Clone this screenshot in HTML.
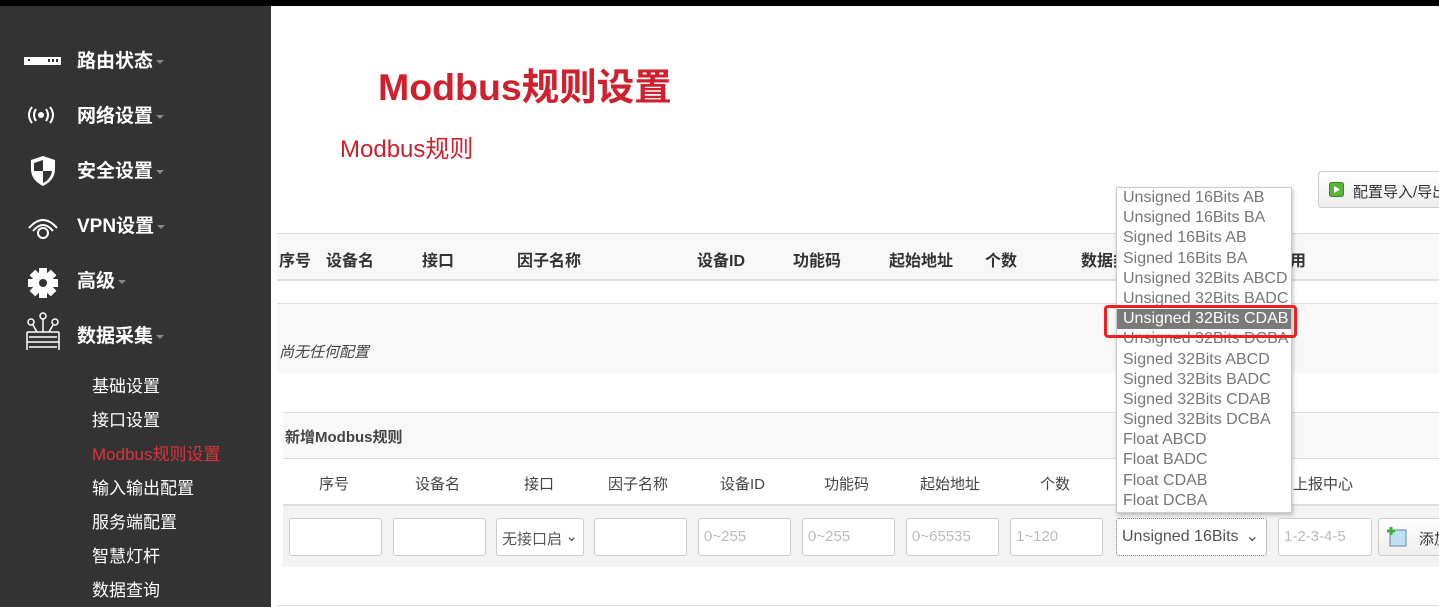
<!DOCTYPE html>
<html><head><meta charset="utf-8"><style>
*{box-sizing:border-box;margin:0;padding:0}
body{width:1439px;height:607px;overflow:hidden;background:#fff;font-family:"Liberation Sans","Noto Sans CJK SC",sans-serif;position:relative;color:#333}
.top{position:absolute;left:0;top:0;width:1439px;height:6px;background:#000}
.side{position:absolute;left:0;top:6px;width:271px;height:601px;background:#333}
.mi{position:absolute;left:77px;color:#fff;font-weight:bold;font-size:19px}
.mi .c{display:inline-block;width:0;height:0;border-left:4px solid transparent;border-right:4px solid transparent;border-top:4px solid #888;margin-left:3px;vertical-align:middle}
.ic{position:absolute;left:24px}
.sub{position:absolute;left:92px;color:#fff;font-size:17px}
.a{position:absolute}
.bar{position:absolute;left:277px;width:1162px}
.th{position:absolute;font-weight:bold;font-size:16px;color:#333}
.h2{position:absolute;font-size:15px;color:#444}
.in{position:absolute;top:518px;height:38px;border:1px solid #ccc;border-radius:3px;background:#fff;font-size:15px;color:#bbb;padding:9px 5px}
.dd{position:absolute;left:1116px;top:187px;width:176px;height:326px;background:#fff;border:1px solid #ccc;box-shadow:1px 2px 4px rgba(0,0,0,.25)}
.dd div{height:20.2px;line-height:20px;padding-left:6px;font-size:16px;color:#777;white-space:nowrap}
.dd .s{background:#7a7a7a;color:#fff}
</style></head><body>
<div class="top"></div>
<div class="side">
<svg class="ic" style="top:49px" width="37" height="12"><rect x="0" y="2" width="37" height="8" fill="#fff"/><rect x="4" y="4" width="2" height="2" fill="#333"/><rect x="24" y="4" width="2" height="3" fill="#333"/><rect x="28" y="4" width="2" height="3" fill="#333"/><rect x="32" y="4" width="2" height="3" fill="#333"/></svg>
<div class="mi" style="top:40px">路由状态<span class="c"></span></div>
<svg class="ic" style="top:98px" width="34" height="22"><g fill="none" stroke="#fff" stroke-width="2"><path d="M8 3Q2 11 8 19"/><path d="M12 5Q8 11 12 17"/><path d="M26 3Q32 11 26 19"/><path d="M22 5Q26 11 22 17"/></g><circle cx="17" cy="11" r="3" fill="#fff"/></svg>
<div class="mi" style="top:95px">网络设置<span class="c"></span></div>
<svg class="ic" style="left:29px;top:149px" width="28" height="32"><path d="M14 1L26 5V14Q26 25 14 31Q2 25 2 14V5Z" fill="#fff"/><path d="M14 5V16H23Q22 24 14 28V16H5V8Z" fill="#333"/></svg>
<div class="mi" style="top:150px">安全设置<span class="c"></span></div>
<svg class="ic" style="left:27px;top:208px" width="32" height="26"><g fill="none" stroke="#fff" stroke-width="2"><path d="M2 14Q16 -2 30 14"/><path d="M6 17Q16 5 26 17"/><circle cx="16" cy="19" r="5"/></g></svg>
<div class="mi" style="top:205px">VPN设置<span class="c"></span></div>
<svg class="ic" style="left:27px;top:261px" width="32" height="32"><g fill="#fff"><circle cx="16" cy="16" r="11"/><rect x="12" y="1" width="8" height="30"/><rect x="1" y="12" width="30" height="8"/><rect x="12" y="1" width="8" height="30" transform="rotate(45 16 16)"/><rect x="12" y="1" width="8" height="30" transform="rotate(-45 16 16)"/></g><circle cx="16" cy="16" r="4" fill="#333"/></svg>
<div class="mi" style="top:260px">高级<span class="c"></span></div>
<svg class="ic" style="left:25px;top:306px" width="36" height="40"><g fill="none" stroke="#fff" stroke-width="1.5"><circle cx="18" cy="4" r="3"/><circle cx="6" cy="10" r="3"/><circle cx="30" cy="10" r="3"/><path d="M18 7V20M8 13L12 20M28 13L24 20M2 20H34M4 25H32M2 30H34M4 35H32M2 20V38M34 20V38"/></g></svg>
<div class="mi" style="top:315px">数据采集<span class="c"></span></div>
<div class="sub" style="top:366px">基础设置</div>
<div class="sub" style="top:400px">接口设置</div>
<div class="sub" style="top:434px;color:#e0313d">Modbus规则设置</div>
<div class="sub" style="top:468px">输入输出配置</div>
<div class="sub" style="top:502px">服务端配置</div>
<div class="sub" style="top:536px">智慧灯杆</div>
<div class="sub" style="top:570px">数据查询</div>
</div>

<div class="a" style="left:378px;top:56px;font-size:37.5px;font-weight:bold;color:#d0202e">Modbus规则设置</div>
<div class="a" style="left:340px;top:129px;font-size:24px;color:#d0202e">Modbus规则</div>
<div class="a" style="left:1318px;top:171px;width:140px;height:37px;border:1px solid #ccc;border-radius:4px;background:linear-gradient(#fff,#eee);font-size:15px;color:#333;padding:9px 0 0 34px">配置导入/导出<svg style="position:absolute;left:10px;top:10px" width="15" height="15"><rect x=".5" y=".5" width="14" height="14" rx="2" fill="#5bb43a" stroke="#3a8a22"/><path d="M5 4L11 7.5L5 11Z" fill="#fff"/></svg></div>

<div class="bar" style="top:233px;height:48px;background:#f8f8f8;border-top:1px solid #ddd;border-bottom:2px solid #ddd"></div>
<div class="th" style="left:279px;top:247px">序号</div><div class="th" style="left:326px;top:247px">设备名</div><div class="th" style="left:422px;top:247px">接口</div><div class="th" style="left:517px;top:247px">因子名称</div><div class="th" style="left:697px;top:247px">设备ID</div><div class="th" style="left:793px;top:247px">功能码</div><div class="th" style="left:889px;top:247px">起始地址</div><div class="th" style="left:985px;top:247px">个数</div><div class="th" style="left:1081px;top:247px">数据类</div><div class="th" style="left:1290px;top:247px">用</div>
<div class="bar" style="top:303px;height:70px;background:#f8f8f8;border-top:1px solid #ddd"></div>
<div class="a" style="left:279px;top:341px;font-size:15px;font-style:italic;color:#444">尚无任何配置</div>

<div class="bar" style="left:283px;top:412px;height:47px;background:#f8f8f8;border-top:1px solid #ddd;border-bottom:1px solid #ddd"></div>
<div class="a" style="left:285px;top:426px;font-size:15px;font-weight:bold;color:#444">新增Modbus规则</div>
<div class="bar" style="left:283px;top:504px;height:63px;background:#f3f3f3;border-top:2px solid #ddd"></div>
<div class="h2" style="left:319px;top:473px">序号</div><div class="h2" style="left:415px;top:473px">设备名</div><div class="h2" style="left:524px;top:473px">接口</div><div class="h2" style="left:608px;top:473px">因子名称</div><div class="h2" style="left:720px;top:473px">设备ID</div><div class="h2" style="left:824px;top:473px">功能码</div><div class="h2" style="left:920px;top:473px">起始地址</div><div class="h2" style="left:1040px;top:473px">个数</div><div class="h2" style="left:1293px;top:473px">上报中心</div>
<div class="in" style="left:289px;width:93px"></div>
<div class="in" style="left:393px;width:93px"></div>
<div class="in" style="left:496px;width:88px;color:#555">无接口启 <span style="position:absolute;right:5px;top:8px">⌄</span></div>
<div class="in" style="left:594px;width:93px"></div>
<div class="in" style="left:698px;width:93px">0~255</div>
<div class="in" style="left:802px;width:93px">0~255</div>
<div class="in" style="left:906px;width:93px">0~65535</div>
<div class="in" style="left:1010px;width:93px">1~120</div>
<div class="in" style="left:1116px;width:151px;border:1px dotted #777;color:#555;font-size:16px">Unsigned 16Bits <span style="position:absolute;right:7px;top:7px">⌄</span></div>
<div class="in" style="left:1278px;width:94px">1-2-3-4-5</div>
<div class="in" style="left:1378px;width:80px;color:#333;background:linear-gradient(#fff,#eee);padding-left:40px">添加<svg style="position:absolute;left:8px;top:8px" width="20" height="20"><rect x="3" y="3" width="16" height="16" fill="#bfe0f5" stroke="#5a8ab0"/><path d="M4 0V8M0 4H8" stroke="#3bb03b" stroke-width="3"/></svg></div>
<div class="bar" style="top:605px;height:1px;background:#ddd"></div>

<div class="dd">
<div>Unsigned 16Bits AB</div><div>Unsigned 16Bits BA</div><div>Signed 16Bits AB</div><div>Signed 16Bits BA</div><div>Unsigned 32Bits ABCD</div><div>Unsigned 32Bits BADC</div><div class="s">Unsigned 32Bits CDAB</div><div>Unsigned 32Bits DCBA</div><div>Signed 32Bits ABCD</div><div>Signed 32Bits BADC</div><div>Signed 32Bits CDAB</div><div>Signed 32Bits DCBA</div><div>Float ABCD</div><div>Float BADC</div><div>Float CDAB</div><div>Float DCBA</div>
</div>
<div class="a" style="left:1104px;top:305px;width:193px;height:33px;border:3px solid #f02020;border-radius:4px"></div>
</body></html>
